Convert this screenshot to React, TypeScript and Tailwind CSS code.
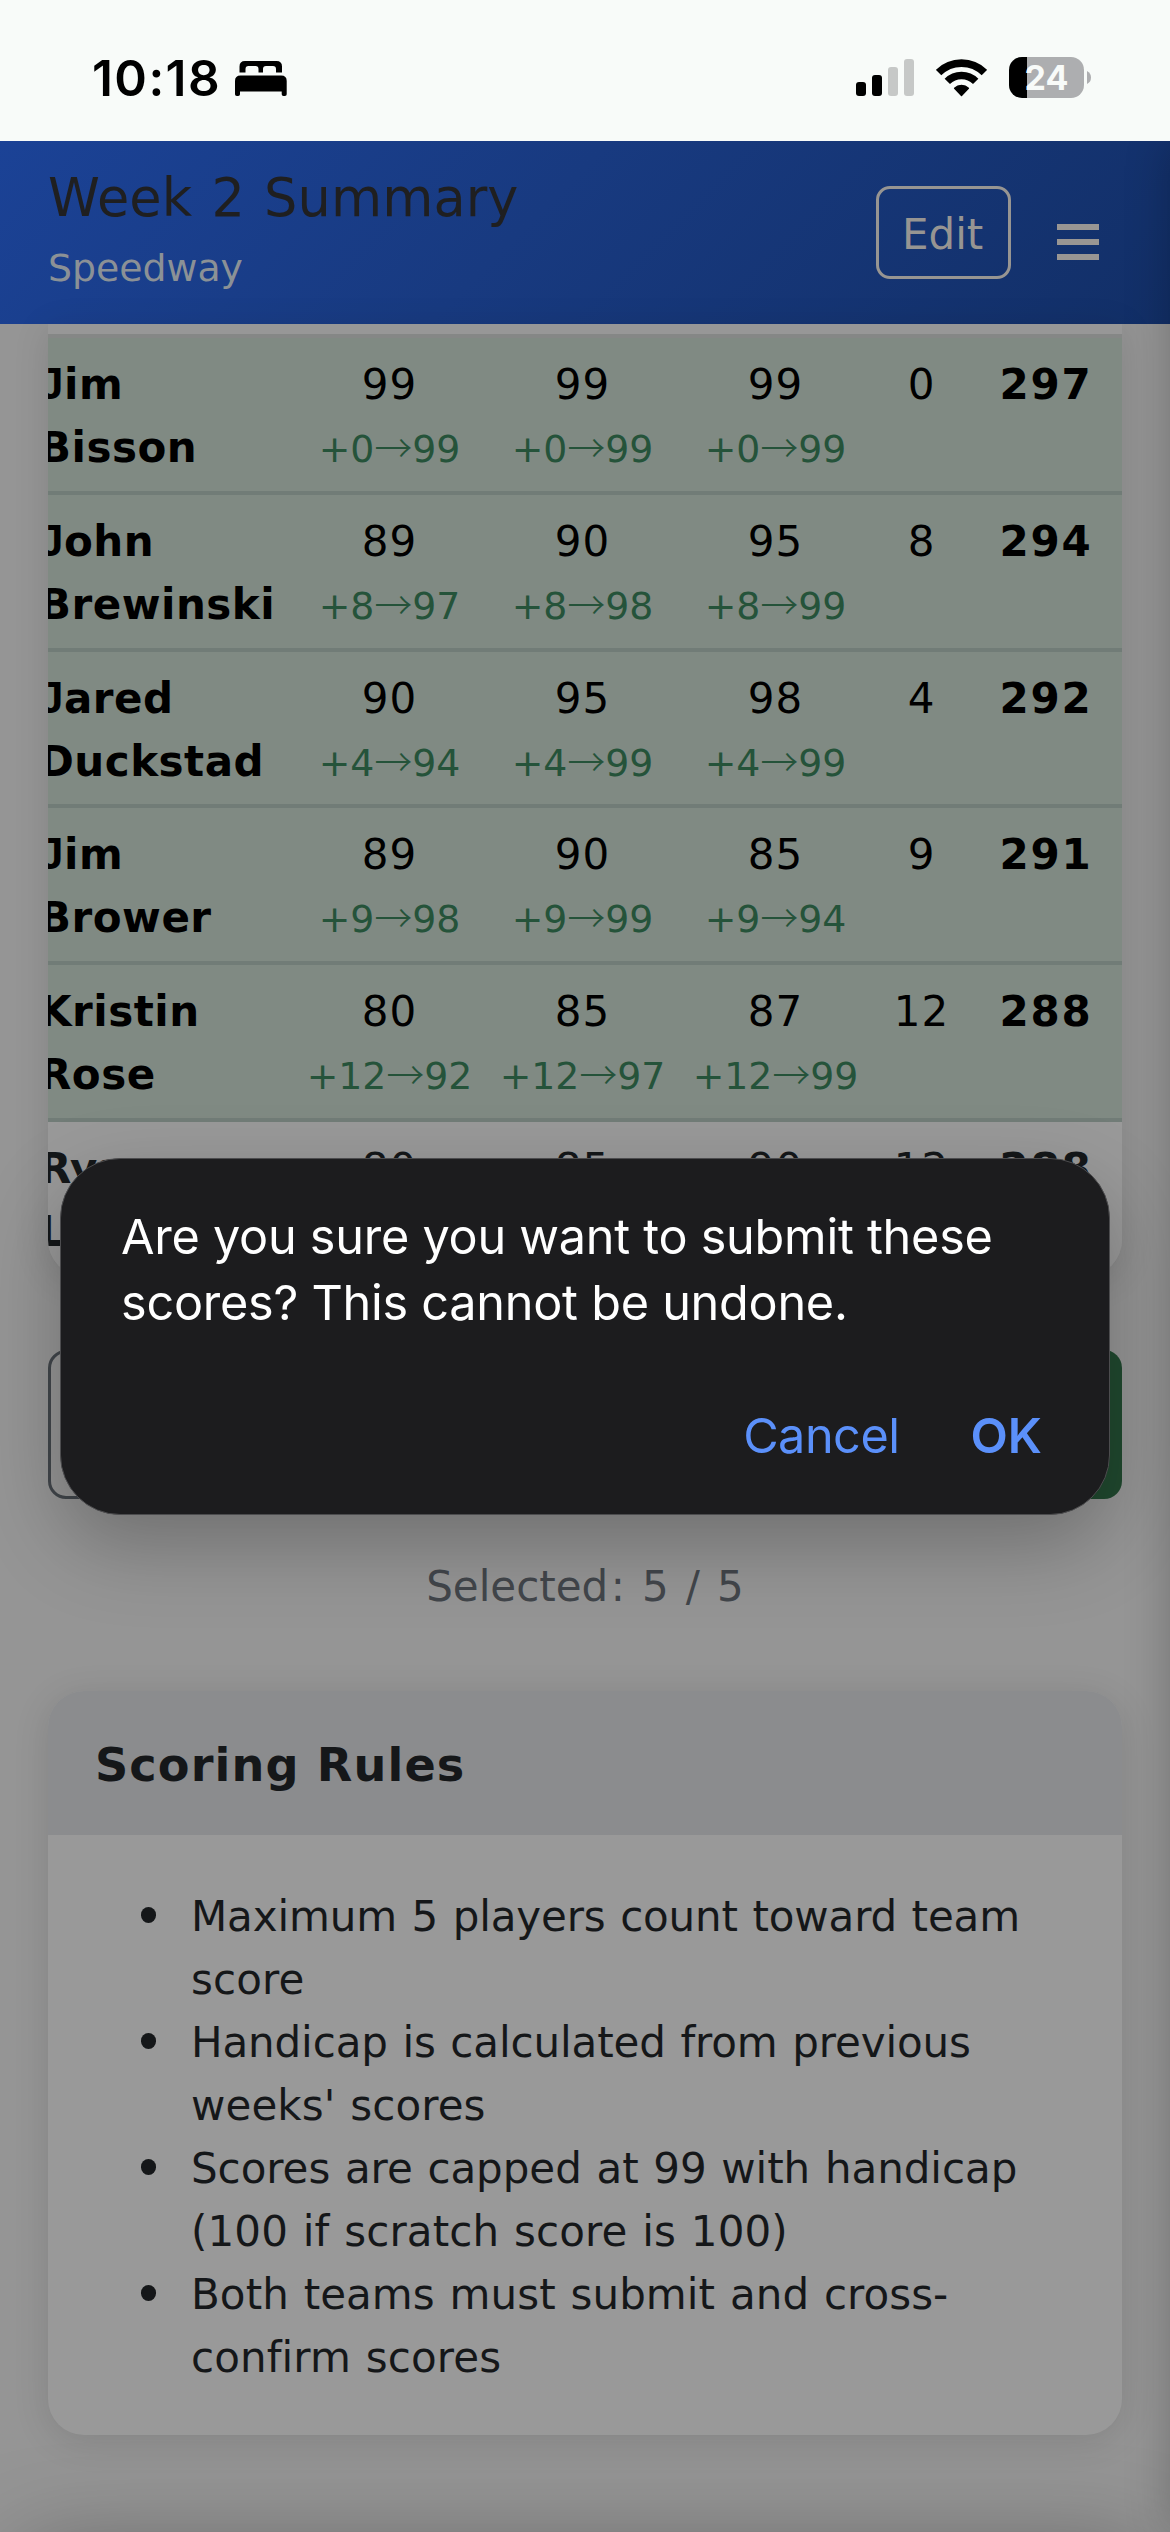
import React from "react";

type Player = {
  name: [string, string];
  scores: { raw: number; net?: string }[];
  hcp: number;
  total: number;
  counted: boolean;
};

const players: Player[] = [
  { name: ["Jim", "Bisson"], scores: [{ raw: 99, net: "99" }, { raw: 99, net: "99" }, { raw: 99, net: "99" }], hcp: 0, total: 297, counted: true },
  { name: ["John", "Brewinski"], scores: [{ raw: 89, net: "97" }, { raw: 90, net: "98" }, { raw: 95, net: "99" }], hcp: 8, total: 294, counted: true },
  { name: ["Jared", "Duckstad"], scores: [{ raw: 90, net: "94" }, { raw: 95, net: "99" }, { raw: 98, net: "99" }], hcp: 4, total: 292, counted: true },
  { name: ["Jim", "Brower"], scores: [{ raw: 89, net: "98" }, { raw: 90, net: "99" }, { raw: 85, net: "94" }], hcp: 9, total: 291, counted: true },
  { name: ["Kristin", "Rose"], scores: [{ raw: 80, net: "92" }, { raw: 85, net: "97" }, { raw: 87, net: "99" }], hcp: 12, total: 288, counted: true },
  { name: ["Ryan", "L"], scores: [{ raw: 80 }, { raw: 85 }, { raw: 90 }], hcp: 12, total: 288, counted: false },
];

const rules = [
  { first: "Maximum 5 players count toward team", second: "score", spacing: "tracking-[-0.15px]" },
  { first: "Handicap is calculated from previous", second: "weeks' scores", spacing: "tracking-[-0.12px]" },
  { first: "Scores are capped at 99 with handicap", second: "(100 if scratch score is 100)", spacing: "tracking-[-0.05px]" },
  { first: "Both teams must submit and cross-", second: "confirm scores", spacing: "tracking-[0.06px]" },
];

function BedIcon() {
  return (
    <svg className="h-[35px] w-[52px]" viewBox="0 0 52 35" fill="#000">
      <path d="M4.5 11.5V5.5Q4.5 0 10 0H41.5Q47 0 47 5.5V11.5H41V8Q41 5 38 5H31Q28 5 28 8V11.5H23.5V8Q23.5 5 20.5 5H13.5Q10.5 5 10.5 8V11.5Z" />
      <path d="M0 20Q0 14.5 5.5 14.5H46.2Q51.7 14.5 51.7 20V33.2Q51.7 35 49.9 35H48.5Q46.7 35 46.7 33.2V30.5H5V33.2Q5 35 3.2 35H1.8Q0 35 0 33.2Z" />
    </svg>
  );
}

function SignalIcon() {
  return (
    <svg className="h-[37px] w-[58px]" viewBox="0 0 58 37">
      <rect x="0" y="23" width="10" height="14" rx="3" fill="#000" />
      <rect x="16" y="16" width="10" height="21" rx="3" fill="#000" />
      <rect x="32" y="8" width="10" height="29" rx="3" fill="#c6c8c7" />
      <rect x="48" y="0" width="10" height="37" rx="3" fill="#c6c8c7" />
    </svg>
  );
}

function WifiIcon() {
  return (
    <svg className="h-[38px] w-[51px]" viewBox="0 0 51 38" fill="none" stroke="#000" strokeWidth="7.6">
      <path d="M2.6 13.6A32.4 32.4 0 0 1 48.4 13.6" />
      <path d="M11.3 22.4A20.1 20.1 0 0 1 39.7 22.4" />
      <path d="M25.5 36.4L18.6 29.2A9.8 9.8 0 0 1 32.4 29.2Z" fill="#000" strokeWidth="1.4" strokeLinejoin="round" />
    </svg>
  );
}

function Battery() {
  return (
    <div className="flex items-center gap-[3px]">
      <div className="flex h-[41px] w-[75px] items-center justify-center rounded-[13px] bg-[linear-gradient(90deg,#000_18px,#adaeb0_18px)] font-['Inter',sans-serif] text-[34px] leading-[41px] font-bold text-[#f8fbf9]">
        24
      </div>
      <svg className="h-[13px] w-[4px]" viewBox="0 0 4 13">
        <path d="M0 0Q4 2 4 6.5Q4 11 0 13Z" fill="#adaeb0" />
      </svg>
    </div>
  );
}

function NameLine({ text }: { text: string }) {
  const hasJ = text.startsWith("J");
  return (
    <div className="h-[63px]">
      {hasJ && <span className="font-['Liberation_Sans',sans-serif] text-[44px] leading-[0]">J</span>}
      {hasJ ? text.slice(1) : text}
    </div>
  );
}

function Row({ p }: { p: Player }) {
  return (
    <div
      className={
        p.counted
          ? "h-[156.8px] border-b-4 border-[#717c77] bg-[#808a83] text-black"
          : "h-[154px] bg-[#999999] text-[#141719]"
      }
    >
      <div className="-ml-[9px] grid grid-cols-[254px_193px_193px_193px_99px_150px] pt-[15px] text-[42px] leading-[63px] whitespace-nowrap">
        <div className="font-bold tracking-[0.5px]">
          <NameLine text={p.name[0]} />
          <NameLine text={p.name[1]} />
        </div>
        {p.scores.map((s, i) => (
          <div key={i} className="text-center">
            <div className="h-[63px] tracking-[1px]">{s.raw}</div>
            {s.net && (
              <div className="h-[63px] text-[#25533a]">
                <span className="text-[37.8px] leading-[0]">
                  +{p.hcp}
                  <span className="font-['Noto_Sans_CJK_JP',sans-serif] leading-[0] font-light">→</span>
                  {s.net}
                </span>
              </div>
            )}
          </div>
        ))}
        <div className="text-center tracking-[1px]">{p.hcp}</div>
        <div className="text-center font-bold tracking-[1.8px]">{p.total}</div>
      </div>
    </div>
  );
}

export default function App() {
  return (
    <div className="relative flex h-[2532px] w-[1170px] flex-col overflow-hidden bg-[#959595] font-['DejaVu_Sans',Verdana,sans-serif]">
      <div className="relative z-20 flex h-[141px] shrink-0 items-start justify-between bg-[#f8fbf9] pr-[79px] pl-[92px]">
        <div className="flex pt-[48px]">
          <span className="w-[143px] font-['Inter',sans-serif] text-[49.5px] leading-[60px] font-semibold tracking-[1.4px] text-black">10:18</span>
          <div className="pt-[13px]">
            <BedIcon />
          </div>
        </div>
        <div className="flex pt-[57px]">
          <div className="pt-[2px]">
            <SignalIcon />
          </div>
          <div className="mr-[22px] ml-[22px] pt-[2px]">
            <WifiIcon />
          </div>
          <Battery />
        </div>
      </div>

      <header className="flex h-[183px] shrink-0 justify-between bg-[linear-gradient(135deg,#1b4296_0%,#183a80_45%,#122f67_100%)] pr-[71px] pl-[48px]">
        <div className="pt-[24px]">
          <h1 className="text-[52.5px] leading-[66px] tracking-[0.1px] text-[#1f1f20] [word-spacing:2.4px]">Week 2 Summary</h1>
          <div className="mt-[9px] text-[37.8px] leading-[57px] text-[#8b9196]">Speedway</div>
        </div>
        <div className="flex gap-[46px] pt-[45px]">
          <div className="h-[93px] w-[135px] rounded-[14px] border-[3px] border-[#979592] pt-[2px] pl-[23px] text-[42px] leading-[87px] text-[#979592]">
            Edit
          </div>
          <div className="flex flex-col gap-[9px] pt-[38px]">
            <div className="h-[6px] w-[42px] bg-[#999693]" />
            <div className="h-[6px] w-[42px] bg-[#999693]" />
            <div className="h-[6px] w-[42px] bg-[#999693]" />
          </div>
        </div>
      </header>

      <main className="flex flex-col px-[48px]">
        <section className="h-[952px] overflow-hidden rounded-b-[36px] bg-[#979797] shadow-[0_6px_36px_rgba(0,0,0,0.12)]">
          <div className="h-[14px] border-b-4 border-[#858786]" />
          {players.map((p, i) => (
            <Row key={i} p={p} />
          ))}
        </section>

        <div className="mt-[74px] grid h-[149px] grid-cols-2 gap-[24px]">
          <div className="rounded-[18px] border-[3px] border-[#41464b]" />
          <div className="rounded-[18px] bg-[#20492f]" />
        </div>

        <div className="mt-[56px] text-center text-[42px] leading-[63px] text-[#42464b] [word-spacing:1.4px]">
          Selected<span className="px-[2.4px]">:</span> 5 <span className="px-[2.4px]">/</span> 5
        </div>

        <section className="mt-[73px] h-[744px] overflow-hidden rounded-[36px] bg-[#999999] shadow-[0_6px_36px_rgba(0,0,0,0.12)]">
          <h2 className="h-[144px] bg-[#8b8c8e] pt-[2px] pl-[47px] text-[46.2px] leading-[144px] font-bold tracking-[1.1px] text-[#151719]">
            Scoring Rules
          </h2>
          <ul className="pt-[50px] pl-[93px] text-[42px] leading-[63px] whitespace-nowrap text-[#151719] [word-spacing:1.4px]">
            {rules.map((r) => (
              <li key={r.first} className="flex gap-[35px]">
                <span className="mt-[22px] h-[16px] w-[15px] shrink-0 rounded-full bg-[#151719]" />
                <span className={r.spacing}>
                  {r.first}
                  <br />
                  <span className="tracking-[0.1px]">{r.second}</span>
                </span>
              </li>
            ))}
          </ul>
        </section>
      </main>

      <div className="absolute top-[141px] -right-[60px] h-[2391px] w-[60px] shadow-[0_0_46px_rgba(0,0,0,0.24)]" />
      <div className="absolute top-[2552px] left-[20px] h-[100px] w-[1130px] shadow-[0_0_100px_rgba(0,0,0,0.35)]" />

      <div className="absolute top-[1158px] left-[60px] h-[357px] w-[1050px] rounded-[60px] border border-[#4c4c4e] bg-[#1c1c1e] pt-[45px] pr-[67px] pl-[60px] font-['Inter',sans-serif] text-[48.6px] leading-[66px] whitespace-nowrap shadow-[0_30px_80px_rgba(0,0,0,0.25)]">
        <p className="tracking-[-0.26px] text-white">
          Are you sure you want to submit these
          <br />
          scores? This cannot be undone.
        </p>
        <div className="mt-[67px] flex justify-end gap-[71px] text-[#5b90fa]">
          <span className="tracking-[-0.5px]">Cancel</span>
          <span className="font-semibold">OK</span>
        </div>
      </div>
    </div>
  );
}
